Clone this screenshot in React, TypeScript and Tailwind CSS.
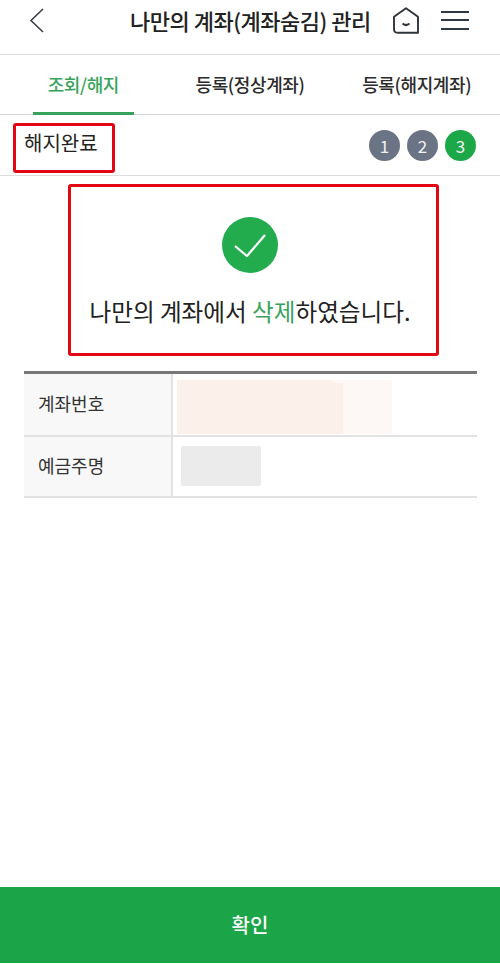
const font = "[font-family:'Noto_Sans_CJK_KR','Noto_Sans',sans-serif]";

const Tabs = [
  { label: "조회/해지", active: true },
  { label: "등록(정상계좌)", active: false },
  { label: "등록(해지계좌)", active: false },
];

const Steps = [
  { n: 1, color: "bg-[#6b7485]" },
  { n: 2, color: "bg-[#6b7485]" },
  { n: 3, color: "bg-[#1ca748]" },
];

const App = () => {
  return (
    <div className={`${font} flex h-[964px] w-[500px] flex-col overflow-hidden bg-white text-[#222]`}>
      {/* header */}
      <header className="relative flex h-[55px] shrink-0 items-center border-b border-[#dedede] pb-[14px]">
        <button className="ml-[29px] flex h-[26px] w-[15px] items-center justify-center">
          <svg width="15" height="25" viewBox="0 0 15 25" fill="none" stroke="#3a3f45" strokeWidth="1.6">
            <path d="M14 1 L2 12.5 L14 24" />
          </svg>
        </button>
        <h1 className="ml-[86px] w-[240px] whitespace-nowrap text-center text-[22px] font-medium leading-[26px] tracking-[-0.5px]">
          나만의 계좌(계좌숨김) 관리
        </h1>
        <button className="ml-[23px] mt-[1px] flex">
          <svg width="26" height="27" viewBox="0 0 26 27" fill="none" stroke="#2f353b" strokeWidth="1.9" strokeLinejoin="round">
            <path d="M13 1.2 L25 9.8 V25.8 H4.5 Q1 25.8 1 22.3 V9.8 Z" />
            <path d="M9.5 16.5 Q13 19.5 16.5 16.5" strokeWidth="2.2" />
          </svg>
        </button>
        <button className="ml-[22px] flex w-[28px] flex-col gap-[6.5px]">
          <span className="h-[2px] w-full bg-[#2c3a46]" />
          <span className="h-[2px] w-full bg-[#2c3a46]" />
          <span className="h-[2px] w-full bg-[#2c3a46]" />
        </button>
      </header>

      {/* tabs */}
      <nav className="grid h-[60px] shrink-0 grid-cols-3 border-b border-[#d8d8d8]">
        {Tabs.map((t) => (
          <div key={t.label} className="relative flex items-center justify-center pb-[1px]">
            <span
              className={`whitespace-nowrap text-[18px] font-medium tracking-[-0.4px] ${
                t.active ? "text-[#38a35c]" : "text-[#2b2b2b]"
              }`}
            >
              {t.label}
            </span>
            {t.active && <span className="absolute bottom-[-1px] left-[33px] h-[3px] w-[101px] bg-[#38a35c]" />}
          </div>
        ))}
      </nav>

      {/* step row */}
      <section className="relative flex h-[61px] shrink-0 items-start justify-between border-b border-[#dcdcdc] pl-[24px] pr-[24px]">
        <span className="mt-[14px] text-[20px] leading-[28px] text-[#222]">해지완료</span>
        <div className="mt-[15px] flex gap-[7px]">
          {Steps.map((s) => (
            <span
              key={s.n}
              className={`flex h-[31px] w-[31px] items-center justify-center rounded-full text-[17px] text-[#f2f2f2] ${s.color}`}
            >
              {s.n}
            </span>
          ))}
        </div>
        <div className="absolute left-[13px] top-[8px] h-[50px] w-[102px] rounded-[3px] border-[3px] border-[#e30613]" />
      </section>

      {/* result message */}
      <section className="ml-[68px] mt-[8px] flex h-[172px] w-[371px] shrink-0 flex-col items-center rounded-[3px] border-[3px] border-[#e30613] pr-[7px] pt-[30px]">
        <span className="flex h-[56px] w-[56px] items-center justify-center rounded-full bg-[#22ac4e]">
          <svg width="32" height="24" viewBox="0 0 32 24" fill="none" stroke="#fff" strokeWidth="2.2">
            <path d="M1 13 L13 23 L31 2" />
          </svg>
        </span>
        <p className="mt-[22px] whitespace-nowrap text-[23.6px] leading-[32px] text-[#222]">
          나만의 계좌에서 <span className="text-[#38a35c]">삭제</span>하였습니다.
        </p>
      </section>

      {/* account table */}
      <section className="ml-[24px] mt-[15px] w-[453px] shrink-0 border-t-[3px] border-[#777]">
        <div className="flex h-[63px] border-b-2 border-[#e2e2e2]">
          <div className="flex w-[149px] shrink-0 items-center border-r-2 border-[#e2e2e2] bg-[#f8f8f8] pb-[2px] pl-[14px] text-[18px] text-[#333]">
            계좌번호
          </div>
          <div className="relative flex-1">
            <div className="absolute left-[4px] top-[6px] h-[54px] w-[215px] bg-[#fdf8f5]" />
            <div className="absolute left-[4px] top-[6px] h-[54px] w-[155px] bg-[#fbf0ea]" />
            <div className="absolute left-[4px] top-[9px] h-[51px] w-[166px] bg-[#fbf0ea]" />
          </div>
        </div>
        <div className="flex h-[61px] border-b-2 border-[#e2e2e2]">
          <div className="flex w-[149px] shrink-0 items-center border-r-2 border-[#e2e2e2] bg-[#f8f8f8] pb-[2px] pl-[14px] text-[18px] text-[#333]">
            예금주명
          </div>
          <div className="relative flex-1">
            <div className="absolute left-[8px] top-[9px] h-[40px] w-[80px] rounded-[2px] bg-[#ebebeb]" />
          </div>
        </div>
      </section>

      {/* confirm */}
      <button className="mt-auto mb-[1px] flex h-[76px] w-full shrink-0 items-center justify-center bg-[#1ba548] text-[20px] font-medium text-white">
        확인
      </button>
    </div>
  );
};

export default App;
